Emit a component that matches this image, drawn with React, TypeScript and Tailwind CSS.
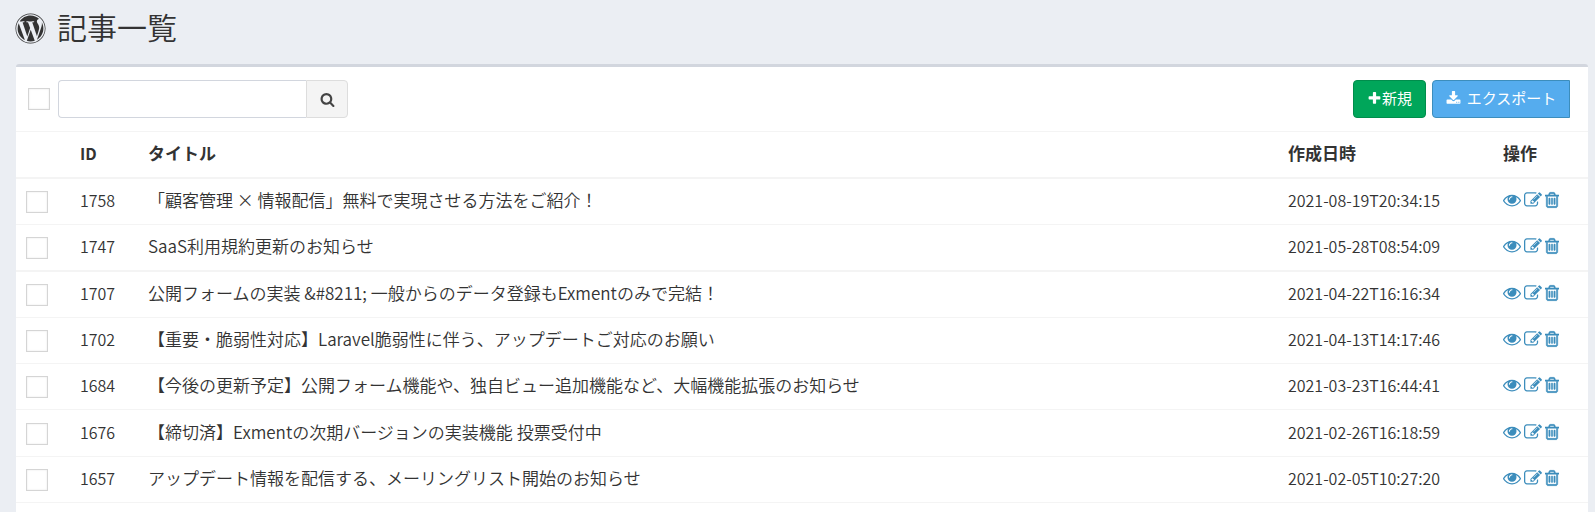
import { FaWordpress } from "react-icons/fa";

const paths = {
  eye: "M1664 960q-152-236-381-353 61 104 61 225 0 185-131.5 316.5t-316.5 131.5-316.5-131.5-131.5-316.5q0-121 61-225-229 117-381 353 133 205 333.5 326.5t434.5 121.5 434.5-121.5 333.5-326.5zm-720-384q0-20-14-34t-34-14q-125 0-214.5 89.5t-89.5 214.5q0 20 14 34t34 14 34-14 14-34q0-86 61-147t147-61q20 0 34-14t14-34zm848 384q0 34-20 69-140 230-376.5 368.5t-499.5 138.5-499.5-139-376.5-368q-20-35-20-69t20-69q140-229 376.5-368t499.5-139 499.5 139 376.5 368q20 35 20 69z",
  edit: "M888 1184l116-116-152-152-116 116v56h96v96h56zm440-720q-16-16-33 1l-350 350q-17 17-1 33t33-1l350-350q17-17 1-33zm80 594v190q0 119-84.5 203.5t-203.5 84.5h-832q-119 0-203.5-84.5t-84.5-203.5v-832q0-119 84.5-203.5t203.5-84.5h832q63 0 117 25 15 7 18 23 3 17-9 29l-49 49q-14 14-32 8-23-6-45-6h-832q-66 0-113 47t-47 113v832q0 66 47 113t113 47h832q66 0 113-47t47-113v-126q0-13 9-22l64-64q15-15 35-7t20 29zm-96-738l288 288-672 672h-288v-288zm444 132l-92 92-288-288 92-92q28-28 68-28t68 28l152 152q28 28 28 68t-28 68z",
  trash: "M704 736v576q0 14-9 23t-23 9h-64q-14 0-23-9t-9-23v-576q0-14 9-23t23-9h64q14 0 23 9t9 23zm256 0v576q0 14-9 23t-23 9h-64q-14 0-23-9t-9-23v-576q0-14 9-23t23-9h64q14 0 23 9t9 23zm256 0v576q0 14-9 23t-23 9h-64q-14 0-23-9t-9-23v-576q0-14 9-23t23-9h64q14 0 23 9t9 23zm128 724v-948h-896v948q0 22 7 40.5t14.5 27 10.5 8.5h832q3 0 10.5-8.5t14.5-27 7-40.5zm-672-1076h448l-48-117q-7-9-17-11h-317q-10 2-17 11zm928 32v64q0 14-9 23t-23 9h-96v948q0 83-47 143.5t-113 60.5h-832q-66 0-113-58.5t-47-141.5v-952h-96q-14 0-23-9t-9-23v-64q0-14 9-23t23-9h309l70-167q15-37 54-63t79-26h320q40 0 79 26t54 63l70 167h309q14 0 23 9t9 23z",
  search: "M1216 832q0-185-131.5-316.5t-316.5-131.5-316.5 131.5-131.5 316.5 131.5 316.5 316.5 131.5 316.5-131.5 131.5-316.5zm512 832q0 52-38 90t-90 38q-54 0-90-38l-343-342q-179 124-399 124-143 0-273.5-55.5t-225-150-150-225-55.5-273.5 55.5-273.5 150-225 225-150 273.5-55.5 273.5 55.5 225 150 150 225 55.5 273.5q0 220-124 399l343 343q37 37 37 90z",
  plus: "M1600 736v192q0 40-28 68t-68 28h-416v416q0 40-28 68t-68 28h-192q-40 0-68-28t-28-68v-416h-416q-40 0-68-28t-28-68v-192q0-40 28-68t68-28h416v-416q0-40 28-68t68-28h192q40 0 68 28t28 68v416h416q40 0 68 28t28 68z",
  download: "M1344 1344q0-26-19-45t-45-19-45 19-19 45 19 45 45 19 45-19 19-45zm256 0q0-26-19-45t-45-19-45 19-19 45 19 45 45 19 45-19 19-45zm128-224v320q0 40-28 68t-68 28h-1472q-40 0-68-28t-28-68v-320q0-40 28-68t68-28h465l135 136q58 56 136 56t136-56l136-136h464q40 0 68 28t28 68zm-325-569q17 41-14 70l-448 448q-18 19-45 19t-45-19l-448-448q-31-29-14-70 17-39 59-39h256v-448q0-26 19-45t45-19h256q26 0 45 19t19 45v448h256q42 0 59 39z",
};

function Icon({ name, className, viewBox = "0 0 1792 1792" }: { name: keyof typeof paths; className: string; viewBox?: string }) {
  return (
    <svg viewBox={viewBox} fill="currentColor" aria-hidden="true" className={`shrink-0 ${className}`}>
      <path d={paths[name]} />
    </svg>
  );
}

function Tick({ label }: { label: string }) {
  return (
    <input
      type="checkbox"
      aria-label={label}
      className="block size-[22px] shrink-0 appearance-none border border-[#d5d5d5] bg-white shadow-[inset_0_0_2px_#e4e4e4] checked:bg-[#3c8dbc]"
    />
  );
}

const articles = [
  { id: 1758, title: "「顧客管理 × 情報配信」無料で実現させる方法をご紹介！", created: "2021-08-19T20:34:15" },
  { id: 1747, title: "SaaS利用規約更新のお知らせ", created: "2021-05-28T08:54:09" },
  { id: 1707, title: "公開フォームの実装 &#8211; 一般からのデータ登録もExmentのみで完結！", created: "2021-04-22T16:16:34" },
  { id: 1702, title: "【重要・脆弱性対応】Laravel脆弱性に伴う、アップデートご対応のお願い", created: "2021-04-13T14:17:46" },
  { id: 1684, title: "【今後の更新予定】公開フォーム機能や、独自ビュー追加機能など、大幅機能拡張のお知らせ", created: "2021-03-23T16:44:41" },
  { id: 1676, title: "【締切済】Exmentの次期バージョンの実装機能 投票受付中", created: "2021-02-26T16:18:59" },
  { id: 1657, title: "アップデート情報を配信する、メーリングリスト開始のお知らせ", created: "2021-02-05T10:27:20" },
];

const rowStyle = (i: number) => {
  if (i === 0 || i === 2) return "h-[47px] *:border-t-2";
  return i === 5 ? "h-[47px] *:border-t" : "h-[46px] *:border-t";
};

export default function App() {
  return (
    <div className="h-screen overflow-hidden bg-[#ebeef3] pr-[7px] pl-[15px] font-['Noto_Sans_CJK_JP',sans-serif] text-[#333]">
      <header className="flex h-16 items-start gap-[11px] pt-[13px]">
        <FaWordpress className="size-[31px]" aria-hidden="true" />
        <h1 className="text-[30px] leading-[26px] font-[350]">記事一覧</h1>
      </header>

      <main className="ml-px min-h-full rounded-[3px] border-t-[3px] border-[#d2d6de] bg-white">
        <div className="flex items-center justify-between py-[13px] pr-[18px] pl-3">
          <div className="flex items-center gap-2">
            <Tick label="すべて選択" />
            <form className="flex h-[38px]" onSubmit={(e) => e.preventDefault()}>
              <input
                type="search"
                aria-label="検索"
                className="w-[248px] rounded-l-[4px] border border-r-0 border-[#d2d6de] bg-white px-3 text-[15px] outline-none"
              />
              <button
                type="submit"
                aria-label="検索する"
                className="flex w-[42px] items-center justify-center rounded-r-[4px] border border-[#ddd] bg-[#f4f4f4] text-[#444]"
              >
                <Icon name="search" className="size-[15px]" />
              </button>
            </form>
          </div>
          <div className="flex h-[38px] gap-1.5 text-[15px] leading-5 text-white">
            <button type="button" className="flex w-[73px] items-center justify-center rounded-[4px] border border-[#008d4c] bg-[#00a65a] pb-0.5">
              <Icon name="plus" className="size-[15px]" />
              新規
            </button>
            <button type="button" className="flex w-[138px] items-center justify-center gap-1.5 rounded-l-[4px] border border-[#3c8dbc] bg-[#55acee] pb-0.5">
              <Icon name="download" className="size-[15px]" />
              エクスポート
            </button>
          </div>
        </div>

        <table className="w-full table-fixed border-separate border-spacing-0 text-left text-[17px] leading-6">
          <colgroup>
            <col className="w-[54px]" />
            <col className="w-[68px]" />
            <col />
            <col className="w-[215px]" />
            <col className="w-[95px]" />
          </colgroup>
          <thead>
            <tr className="h-[46px] *:border-t *:border-[#f4f4f4] *:px-2.5 *:pb-1 *:font-bold">
              <td />
              <th className="text-[16px]">ID</th>
              <th>タイトル</th>
              <th>作成日時</th>
              <th>操作</th>
            </tr>
          </thead>
          <tbody>
            {articles.map((a, i) => (
              <tr key={a.id} className={`*:border-[#f4f4f4] *:px-2.5 ${rowStyle(i)}`}>
                <td className="pt-px">
                  <Tick label={`${a.id}を選択`} />
                </td>
                <td className="pb-[3px] text-[16px] font-[350]">{a.id}</td>
                <td className="pb-[3px] font-[350] whitespace-nowrap">{a.title}</td>
                <td className="pb-[3px] text-[16px] font-[350]">{a.created}</td>
                <td className="pb-[3px]">
                  <div className="flex items-center gap-[3px] text-[#3c8dbc]">
                    <a href="#view" aria-label={`${a.id}を表示`}>
                      <Icon name="eye" className="size-[18px]" />
                    </a>
                    <a href="#edit" aria-label={`${a.id}を編集`}>
                      <Icon name="edit" className="size-[18px]" />
                    </a>
                    <a href="#delete" aria-label={`${a.id}を削除`}>
                      <Icon name="trash" viewBox="192 0 1408 1792" className="h-[18px] w-[14px] stroke-current stroke-[50]" />
                    </a>
                  </div>
                </td>
              </tr>
            ))}
            <tr className="h-[46px] *:border-t *:border-[#f4f4f4]">
              <td colSpan={5} />
            </tr>
          </tbody>
        </table>
      </main>
    </div>
  );
}
